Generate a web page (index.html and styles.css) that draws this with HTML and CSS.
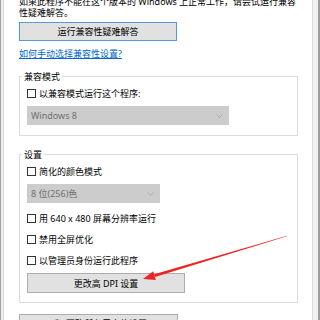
FILE: index.html
```html
<!DOCTYPE html>
<html lang="zh-CN">
<head>
<meta charset="utf-8">
<title>兼容性</title>
<link rel="stylesheet" href="styles.css">
</head>
<body>
<div class="window">
  <div class="page">
    <div class="intro">
      <div class="line">如果此程序不能在这个版本的 Windows 上正常工作，请尝试运行兼容</div>
      <div class="line">性疑难解答。</div>
    </div>
    <div class="btn btn-run">运行兼容性疑难解答</div>
    <div class="linkrow"><a class="link" href="#">如何手动选择兼容性设置?</a></div>

    <section class="group group-compat">
      <div class="legend">兼容模式</div>
      <div class="check first"><span class="box"></span><span>以兼容模式运行这个程序:</span></div>
      <div class="select select-wide"><span>Windows 8</span><svg class="chev" width="7" height="4" viewBox="0 0 7 4"><path d="M0.5 0.5 L3.5 3.5 L6.5 0.5" fill="none" stroke="#a8a8a8" stroke-width="0.9"/></svg></div>
    </section>

    <section class="group group-settings">
      <div class="legend">设置</div>
      <div class="check first"><span class="box"></span><span>简化的颜色模式</span></div>
      <div class="select select-narrow"><span>8 位(256)色</span><svg class="chev" width="7" height="4" viewBox="0 0 7 4"><path d="M0.5 0.5 L3.5 3.5 L6.5 0.5" fill="none" stroke="#a8a8a8" stroke-width="0.9"/></svg></div>
      <div class="check"><span class="box"></span><span>用 640 x 480 屏幕分辨率运行</span></div>
      <div class="check"><span class="box"></span><span>禁用全屏优化</span></div>
      <div class="check"><span class="box"></span><span>以管理员身份运行此程序</span></div>
      <div class="btn btn-dpi">更改高 DPI 设置</div>
    </section>

    <div class="btn btn-all">
      <svg class="shield" width="8" height="10" viewBox="0 0 8 10">
        <path d="M4 0 L8 1.2 V5 C8 7.5 6 9 4 10 V0 Z" fill="#f2c12e"/>
        <path d="M4 0 L0 1.2 V5 C0 7.5 2 9 4 10 V0 Z" fill="#2a6fc9"/>
        <path d="M0 5 H8 C8 7.5 6 9 4 10 C2 9 0 7.5 0 5 Z" fill="#3d8ee6" opacity="0.6"/>
      </svg>
      <span>更改所有用户的设置</span>
    </div>

    <svg class="arrow" width="308" height="320" viewBox="4 0 308 320">
      <polygon points="287.1,235.7 286.9,236.3 154.9,277.0 154.1,274.2" fill="#ee2424"/>
      <polygon points="143,279 153.2,271.3 155.8,279.9" fill="#ee2424"/>
    </svg>
  </div>
</div>
</body>
</html>
```
FILE: styles.css
```css
* { box-sizing: border-box; }
html, body {
  margin: 0;
  padding: 0;
  width: 320px;
  height: 320px;
  overflow: hidden;
}
body {
  font-family: "Noto Sans", "Noto Sans CJK SC", sans-serif;
  font-size: 9px;
  line-height: 11px;
  color: #000;
}
.window {
  display: flex;
  height: 320px;
  overflow: hidden;
  background: #f0f0f0;
  border-left: 1px solid #a0a0a0;
  border-right: 2px solid #9c9c9c;
  padding-left: 2px;
  padding-right: 5px;
}
.page {
  position: relative;
  flex: 1;
  height: 320px;
  background: #fff;
  border-left: 1px solid #dadada;
  border-right: 1px solid #dadada;
  padding: 0 14px 0 15px;
}
.intro {
  margin-top: -4px;
  height: 22px;
}
.line {
  height: 11px;
  line-height: 11px;
  white-space: nowrap;
  overflow: visible;
}
.btn {
  display: flex;
  align-items: center;
  justify-content: center;
  height: 19px;
  background: #e1e1e1;
  border: 1px solid #adadad;
  white-space: nowrap;
}
.btn-run {
  margin-top: 4px;
  width: 158px;
  border-color: #5498dd;
}
.linkrow {
  margin-top: 7px;
  height: 11px;
  line-height: 11px;
}
.link {
  color: #0066cc;
  text-decoration: underline;
  text-underline-offset: 1px;
}
.group {
  width: 279px;
  border: 1px solid #dcdcdc;
  padding: 0 7px;
}
.legend {
  height: 11px;
  line-height: 11px;
  margin: -6px 0 0 -5px;
  padding: 0 2px;
  width: max-content;
  background: #fff;
}
.group-compat {
  margin-top: 17px;
  padding-bottom: 10px;
}
.group-settings {
  margin-top: 18px;
  padding-bottom: 9px;
}
.check {
  display: flex;
  align-items: center;
  gap: 3px;
  height: 12px;
  margin-top: 9px;
  white-space: nowrap;
}
.check.first { margin-top: 5px; }
.box {
  width: 9px;
  height: 9px;
  border: 1px solid #333;
  background: #fff;
  flex: none;
}
.select {
  margin-top: 7px;
  height: 19px;
  background: #cccccc;
  border: 1px solid #cccccc;
  color: #707070;
  display: flex;
  align-items: center;
  justify-content: space-between;
  padding: 0 5px 0 3px;
}
.select-wide { width: 202px; }
.select-narrow { width: 133px; }
.btn-dpi {
  margin-top: 7px;
  width: 158px;
  height: 20px;
}
.btn-all {
  margin-top: 11px;
  width: 159px;
  height: 19px;
  gap: 4px;
  justify-content: flex-start;
  padding-left: 34px;
}
.shield { flex: none; }
.arrow {
  position: absolute;
  left: 0;
  top: 0;
  pointer-events: none;
}
```
